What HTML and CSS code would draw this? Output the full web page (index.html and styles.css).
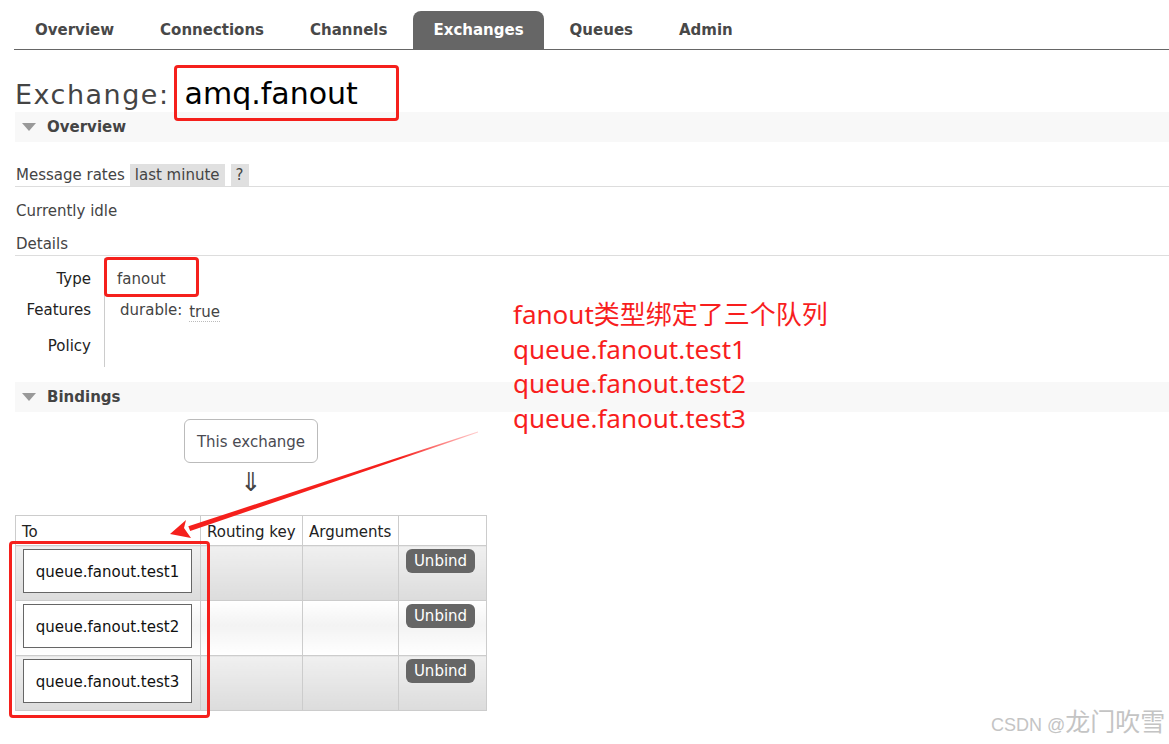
FILE: index.html
```html
<!DOCTYPE html>
<html lang="en">
<head>
    <meta charset="UTF-8">
    <title>RabbitMQ Management - Exchange: amq.fanout</title>
    <link rel="stylesheet" href="styles.css">
</head>

<body>
<div class="page">
    <ul class="tabs">
        <li>Overview</li>
        <li>Connections</li>
        <li>Channels</li>
        <li class="active">Exchanges</li>
        <li>Queues</li>
        <li>Admin</li>
    </ul>

    <h1>Exchange:<span class="name">amq.fanout</span></h1>

    <div class="section-h">Overview</div>
    <div class="rates">
        <span class="rates-label">Message rates</span>
        <span class="chip">last minute</span>
        <span class="chip">?</span>
    </div>
    <p class="idle">Currently idle</p>
    <p class="sub">Details</p>

    <div class="facts">
        <div class="fact r1">
            <div class="k">Type</div>
            <div class="v">fanout<i class="mark mark-type"></i></div>
        </div>
        <div class="fact r2">
            <div class="k">Features</div>
            <div class="v feat">durable: <span class="true">true</span></div>
        </div>
        <div class="fact r3">
            <div class="k">Policy</div>
            <div class="v"></div>
        </div>
    </div>

    <div class="section-h bindings-h">Bindings</div>
    <div class="this-ex">This exchange</div>
    <div class="down">&#8659;</div>

    <div class="bind-wrap">
        <table class="list">
            <tr>
                <th class="c-to">To</th>
                <th class="c-rk">Routing key</th>
                <th class="c-arg">Arguments</th>
                <th class="c-btn"></th>
            </tr>
            <tr class="alt1">
                <td><div class="queue">queue.fanout.test1</div></td>
                <td></td>
                <td></td>
                <td><button class="unbind">Unbind</button></td>
            </tr>
            <tr class="alt2">
                <td><div class="queue">queue.fanout.test2</div></td>
                <td></td>
                <td></td>
                <td><button class="unbind">Unbind</button></td>
            </tr>
            <tr class="alt1">
                <td><div class="queue">queue.fanout.test3</div></td>
                <td></td>
                <td></td>
                <td><button class="unbind">Unbind</button></td>
            </tr>
        </table>
        <div class="mark mark-to"></div>
    </div>
</div>

<!-- annotations drawn on top of the screenshot -->
<svg class="arrow" width="1169" height="744" viewBox="0 0 1169 744">
    <defs>
        <linearGradient id="fade" x1="478" y1="432" x2="170" y2="535" gradientUnits="userSpaceOnUse">
            <stop offset="0" stop-color="#ff3b3b" stop-opacity="0.25"/>
            <stop offset="0.25" stop-color="#f5201c"/>
            <stop offset="1" stop-color="#f5201c"/>
        </linearGradient>
    </defs>
    <polygon points="478.1,432.4 477.9,431.6 188.3,526.2 190.2,531" fill="url(#fade)"/>
    <polygon points="170,534 186,520 184,528 191,538" fill="#f5201c"/>
</svg>

<div class="note">
    fanout类型绑定了三个队列<br>
    queue.fanout.test1<br>
    queue.fanout.test2<br>
    queue.fanout.test3
</div>

<div class="watermark">CSDN @<span>龙门吹雪</span></div>
</body>
</html>
```

FILE: styles.css
```css
*{
    box-sizing: border-box;
}
body{
    margin: 0;
    font-family: "DejaVu Sans", Verdana, sans-serif;
    font-size: 15px;
    color: #444;
    background: #fff;
}
.page{
    padding: 11px 0 30px 15px;
}
p{
    margin: 0;
}

/* tabs */
.tabs{
    display: flex;
    margin: 0 0 0 -1px;
    padding: 0 0 0 1px;
    list-style: none;
    border-bottom: 1px solid #666;
}
.tabs li{
    height: 38px;
    line-height: 39px;
    padding: 0 20px;
    margin-right: 6px;
    font-weight: bold;
    color: #484848;
}
.tabs li.active{
    background-color: #666;
    color: #fff;
    border-radius: 8px 8px 0 0;
}

/* heading */
h1{
    margin: 0;
    padding-top: 27px;
    line-height: 34px;
    font-size: 27px;
    font-weight: normal;
    letter-spacing: 1.5px;
    color: #444;
}
h1 .name{
    margin-left: 4px;
    padding: 8px 38px 7px 8px;
    font-size: 30px;
    letter-spacing: 0;
    color: #000;
    border: 3px solid #f5201c;
    border-radius: 4px;
}

/* section headers */
.section-h{
    display: flex;
    align-items: center;
    height: 30px;
    background-color: #f8f8f8;
    font-weight: bold;
    color: #444;
}
.section-h::before{
    content: "";
    margin: 0 11px 0 7px;
    border-left: 7px solid transparent;
    border-right: 7px solid transparent;
    border-top: 8px solid #999;
}
.bindings-h{
    margin-top: 15px;
}

/* overview */
.rates{
    display: flex;
    margin-top: 22px;
    height: 23px;
    line-height: 22px;
    border-bottom: 1px solid #ddd;
}
.rates-label{
    padding-left: 1px;
    margin-right: 5px;
}
.chip{
    background-color: #e0e0e0;
    padding: 0 5px;
    margin-right: 6px;
}
.idle{
    margin-top: 14px;
    line-height: 20px;
    padding-left: 1px;
}
.sub{
    margin-top: 13px;
    line-height: 21px;
    padding-left: 1px;
    border-bottom: 1px solid #ddd;
}

/* details */
.facts{
    margin-top: 2px;
}
.fact{
    display: flex;
}
.fact .k{
    width: 90px;
    padding-right: 13px;
    text-align: right;
    color: #222;
    line-height: 20px;
    border-right: 1px solid #ccc;
}
.fact .v{
    position: relative;
    padding-left: 12px;
    line-height: 20px;
    color: #444;
}
.r1 .k, .r1 .v{
    height: 36px;
    padding-top: 11px;
}
.r2 .k, .r2 .v{
    height: 32px;
    padding-top: 6px;
}
.r3 .k, .r3 .v{
    height: 41px;
    padding-top: 10px;
}
.feat{
    color: #222;
}
.fact .feat{
    padding-left: 15px;
}
.true{
    margin-left: 2px;
    color: #444;
    vertical-align: -2px;
    border-bottom: 1px dotted #bbb;
}

/* red marks */
.mark{
    position: absolute;
    border: 3px solid #f5201c;
    border-radius: 4px;
}
.mark-type{
    left: -1px;
    top: -1px;
    width: 95px;
    height: 40px;
}
.mark-to{
    left: -6px;
    top: 26px;
    width: 201px;
    height: 177px;
}

/* bindings */
.this-ex{
    width: 134px;
    height: 44px;
    margin: 7px 0 0 169px;
    line-height: 44px;
    text-align: center;
    border: 1px solid #bbb;
    border-radius: 6px;
    color: #4a4a52;
}
.down{
    width: 134px;
    height: 52px;
    margin-left: 169px;
    line-height: 38px;
    font-size: 26px;
    text-align: center;
    color: #444;
}
.bind-wrap{
    position: relative;
    width: 472px;
}
table.list{
    border-collapse: collapse;
    width: 472px;
    color: #222;
}
table.list th, table.list td{
    border: 1px solid #ccc;
    padding: 0 6px;
}
table.list th{
    height: 30px;
    padding-top: 2px;
    text-align: left;
    font-weight: normal;
    background: #fff;
}
.c-to{ width: 185px; }
.c-rk{ width: 102px; }
.c-arg{ width: 96px; }
table.list td{
    height: 55px;
    padding: 3px 6px 0 7px;
    vertical-align: top;
}
tr.alt1 td{
    background: linear-gradient(#f0f0f0, #dcdcdc);
}
tr.alt2 td{
    background: linear-gradient(#fff, #f3f3f3 45%, #fff);
}
.queue{
    width: 169px;
    height: 44px;
    line-height: 44px;
    text-align: center;
    background: #fff;
    border: 1px solid #666;
    color: #111;
}
.unbind{
    width: 69px;
    height: 24px;
    padding: 0;
    font-family: "DejaVu Sans", Verdana, sans-serif;
    font-size: 15px;
    color: #fff;
    background-color: #666;
    border: none;
    border-radius: 6px;
}

/* annotation overlay */
.arrow{
    position: absolute;
    left: 0;
    top: 0;
    pointer-events: none;
}
.note{
    position: absolute;
    left: 513px;
    top: 297px;
    font-family: "Noto Sans", "Noto Sans CJK SC", sans-serif;
    font-size: 26px;
    line-height: 34.6px;
    color: #f81e1e;
}
.watermark{
    position: absolute;
    left: 991px;
    top: 707px;
    font-family: "Liberation Sans", "Noto Sans CJK SC", sans-serif;
    font-size: 18px;
    line-height: 30px;
    color: #c4c4c4;
}
.watermark span{
    font-size: 25px;
}
```
